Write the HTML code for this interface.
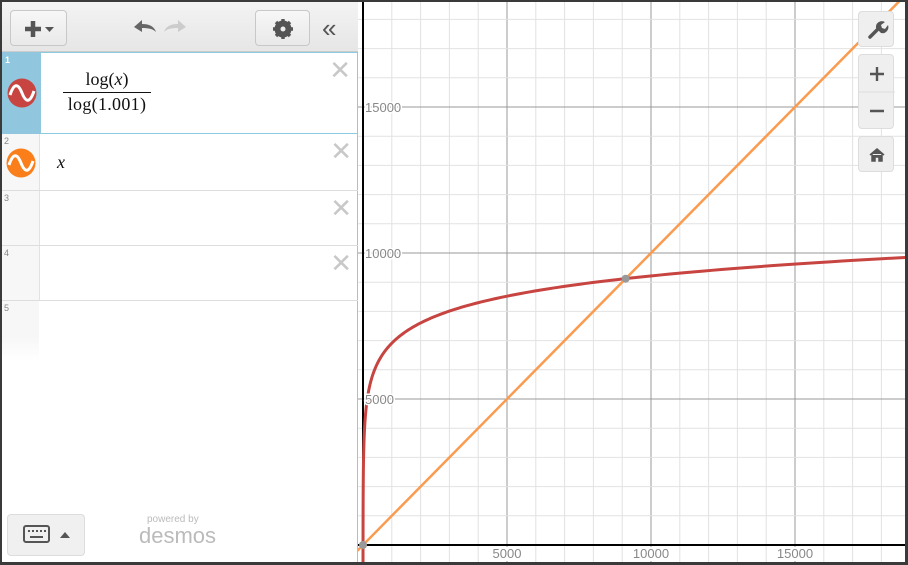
<!DOCTYPE html>
<html><head><meta charset="utf-8">
<style>
*{box-sizing:border-box;margin:0;padding:0}
body{width:908px;height:565px;overflow:hidden;background:#3a3a3a;font-family:"Liberation Sans",sans-serif;position:relative}
#frame{position:absolute;left:2px;top:2px;width:903px;height:560px;background:#fff;overflow:hidden}
#panel{position:absolute;left:0;top:0;width:356px;height:560px;background:#fff;border-right:1px solid #bbb;z-index:2}
#hdr{position:absolute;left:0;top:0;width:356px;height:50px;background:linear-gradient(#f3f3f3,#e6e6e6);border-bottom:1px solid #ccc}
.btn{position:absolute;border:1px solid #c8c8c8;border-radius:4px;background:linear-gradient(#f7f7f7,#e9e9e9)}
.row{position:absolute;left:0;width:356px;border-bottom:1px solid #ddd}
.gut{position:absolute;left:0;top:0;width:38px;height:100%;background:#f7f7f7;border-right:1px solid #e2e2e2}
.num{position:absolute;left:2px;top:2px;font-size:9px;color:#888}
.x{position:absolute;right:6px;top:4px;font-size:26px;color:#c8c8c8;line-height:26px}
.m{font-family:"Liberation Serif",serif;font-size:18px;color:#111}
.gbtn{position:absolute;left:856px;width:36px;border:1px solid #ddd;border-radius:4px;background:#efefef;z-index:3}
</style></head><body>
<div id="frame">
<svg id="g" width="903" height="560" style="position:absolute;left:0;top:0"></svg>
<div id="panel">
 <div id="hdr">
  <div class="btn" style="left:8px;top:8px;width:57px;height:36px">
   <svg width="57" height="36"><path d="M22 10v16M14 18h16" stroke="#555" stroke-width="4.5"/><path d="M34 16h9l-4.5 5z" fill="#555"/></svg>
  </div>
  <svg style="position:absolute;left:128px;top:14px" width="60" height="22"><path d="M4 11l8-7v4c7 0 12 2 14 8-3-3-7-4-14-4v4z" fill="#666"/><path d="M56 11l-8-7v4c-7 0-12 2-14 8 3-3 7-4 14-4v4z" fill="#ccc"/></svg>
  <div class="btn" style="left:253px;top:8px;width:55px;height:36px">
   <svg width="55" height="36"><circle cx="27" cy="18" r="6.5" fill="none" stroke="#555" stroke-width="4"/><g stroke="#555" stroke-width="3.4"><path d="M27 8v20M17 18h20M20 11l14 14M34 11l-14 14"/></g><circle cx="27" cy="18" r="2.5" fill="#eee"/></svg>
  </div>
  <div style="position:absolute;left:320px;top:11px;font-size:26px;color:#555;letter-spacing:-4px">«</div>
 </div>
 <div class="row" style="top:50px;height:82px;border:1px solid #8ccadf;background:#fff">
  <div class="gut" style="background:#90c7de;border:none;left:-1px;top:-1px;height:82px;width:39px"></div>
  <div class="num" style="color:#fff;font-weight:bold">1</div>
  <svg style="position:absolute;left:4px;top:25px" width="30" height="30"><circle cx="15" cy="15" r="14.5" fill="#c74440"/><path d="M3 17c4-12 8-12 12-2s8 10 12-2" stroke="#fff" stroke-width="3" fill="none"/></svg>
  <div class="m" style="position:absolute;left:59px;top:16px;width:90px;text-align:center">log(<i>x</i>)</div>
  <div style="position:absolute;left:60px;top:39px;width:88px;border-top:1px solid #111"></div>
  <div class="m" style="position:absolute;left:55px;top:41px;width:98px;text-align:center;letter-spacing:0.3px">log(1.001)</div>
  <div class="x">✕</div>
 </div>
 <div class="row" style="top:132px;height:57px"><div class="gut"></div><div class="num">2</div>
  <svg style="position:absolute;left:4px;top:14px" width="30" height="30"><circle cx="15" cy="15" r="14.5" fill="#fa7e19"/><path d="M3 17c4-12 8-12 12-2s8 10 12-2" stroke="#fff" stroke-width="3" fill="none"/></svg>
  <div class="m" style="position:absolute;left:55px;top:18px"><i>x</i></div><div class="x">✕</div></div>
 <div class="row" style="top:189px;height:55px"><div class="gut"></div><div class="num">3</div><div class="x">✕</div></div>
 <div class="row" style="top:244px;height:55px"><div class="gut"></div><div class="num">4</div><div class="x">✕</div></div>
 <div class="row" style="top:299px;height:60px;border:none"><div class="gut" style="background:linear-gradient(#f7f7f7 60%,#fff);border-right-color:#fff"></div><div class="num">5</div></div>
 <div class="btn" style="left:5px;top:512px;width:78px;height:42px;background:#f0f0f0;border-color:#ddd">
  <svg width="78" height="42"><rect x="16" y="11" width="25" height="16" rx="2" fill="none" stroke="#555" stroke-width="2"/><g fill="#555"><rect x="20" y="15" width="2" height="2"/><rect x="24" y="15" width="2" height="2"/><rect x="28" y="15" width="2" height="2"/><rect x="32" y="15" width="2" height="2"/><rect x="36" y="15" width="2" height="2"/><rect x="22" y="21" width="13" height="2"/></g><path d="M52 23l5-6 5 6z" fill="#555"/></svg>
 </div>
 <div style="position:absolute;left:145px;top:512px;font-size:10px;color:#bbb">powered by</div>
 <div style="position:absolute;left:137px;top:521px;font-size:22px;color:#bbb">desmos</div>
</div>
<div class="gbtn" style="top:9px;height:36px"><svg width="36" height="36"><path d="M11 25l7-7" stroke="#555" stroke-width="3.5" stroke-linecap="round"/><path d="M17 16a6 6 0 0 1 9-6l-4 3 1 3 3 1 3-4a6 6 0 0 1-7 8z" fill="#555"/></svg></div>
<div class="gbtn" style="top:52px;height:75px"><svg width="36" height="75"><path d="M18 12v14M11 19h14M11 56h14" stroke="#555" stroke-width="2.4"/><path d="M0 37h36" stroke="#ddd"/></svg></div>
<div class="gbtn" style="top:134px;height:36px"><svg width="36" height="36"><path d="M11 18l7-6 7 6M13 17v7h3v-4h4v4h3v-7" fill="#555" stroke="#555" stroke-width="1.5"/></svg></div>
</div>
<script>
var s=document.getElementById('g'),o='',L='';
var ox=361,oy=543,kx=144/5000,ky=146/5000;
function X(v){return ox+v*kx}function Y(v){return oy-v*ky}
for(var i=-1;i<=20;i++){var x=X(i*1000);if(i==0)continue;o+='<line x1="'+x+'" y1="0" x2="'+x+'" y2="560" stroke="'+(i%5?'#e2e2e2':'#999')+'" stroke-width="1"/>';}
for(var i=-1;i<=20;i++){var y=Y(i*1000);if(i==0)continue;o+='<line x1="356" y1="'+y+'" x2="903" y2="'+y+'" stroke="'+(i%5?'#e2e2e2':'#999')+'" stroke-width="1"/>';}
o+='<line x1="'+ox+'" y1="0" x2="'+ox+'" y2="560" stroke="#000" stroke-width="2"/><line x1="356" y1="'+oy+'" x2="903" y2="'+oy+'" stroke="#000" stroke-width="2"/>';
[5000,10000,15000].forEach(function(v){var x=X(v);L+='<rect x="'+(x-19)+'" y="'+(oy+2)+'" width="38" height="14" fill="#fff"/><text x="'+x+'" y="'+(oy+13)+'" font-size="13" fill="#888" text-anchor="middle" font-family="Liberation Sans">'+v+'</text>';
var y=Y(v);L+='<text x="'+(ox+2)+'" y="'+(y+5)+'" font-size="13" fill="#888" font-family="Liberation Sans" stroke="#fff" stroke-width="3" paint-order="stroke">'+v+'</text>';});
o+='<line x1="'+X(-200)+'" y1="'+Y(-200)+'" x2="'+X(20000)+'" y2="'+Y(20000)+'" stroke="#fa9b4f" stroke-width="2.5"/>';
var p='';for(var i=0;i<=400;i++){var v=Math.exp(Math.log(0.5)+i/400*(Math.log(19500)-Math.log(0.5)));var yy=Math.log(v)/Math.log(1.001);p+=(i?'L':'M')+X(v).toFixed(2)+' '+Y(yy).toFixed(2);}
o+='<path d="'+p+'" stroke="#c74440" stroke-width="3" fill="none"/>';
o+=L;
o+='<circle cx="'+X(9119)+'" cy="'+Y(9119)+'" r="4" fill="#999"/><circle cx="'+X(1)+'" cy="'+Y(0)+'" r="4" fill="#999"/>';
s.innerHTML=o;
</script>
</body></html>
